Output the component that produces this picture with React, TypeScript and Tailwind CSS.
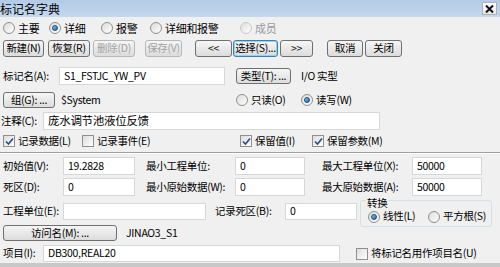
import React from "react";

const font = { fontFamily: '"Noto Sans CJK SC", "Noto Sans", sans-serif' };

function Btn({
  children,
  w,
  disabled,
  focused,
}: {
  children: React.ReactNode;
  w: string;
  disabled?: boolean;
  focused?: boolean;
}) {
  return (
    <div
      className={`${w} h-full shrink-0 flex items-center justify-center rounded-[3px] border leading-none whitespace-nowrap bg-gradient-to-b from-[#f6f6f6] to-[#dcdcdc] ${
        disabled
          ? "border-[#b5b8bb] text-[#a3a3a3]"
          : focused
          ? "border-[#3c7fb1] text-black shadow-[inset_0_0_0_1px_#8fd3f5]"
          : "border-[#707070] text-black"
      }`}
    >
      {children}
    </div>
  );
}

function Radio({ checked, disabled }: { checked?: boolean; disabled?: boolean }) {
  return (
    <div
      className={`w-[12px] h-[12px] shrink-0 rounded-full border flex items-center justify-center bg-gradient-to-br from-[#dcdcdc] to-[#ffffff] ${
        disabled ? "border-[#c8c8c8]" : "border-[#8e8f8f]"
      }`}
    >
      {checked && (
        <div className="w-[6px] h-[6px] rounded-full bg-gradient-to-br from-[#8ad0f5] to-[#1a5f9e] border border-[#1c4d7c]" />
      )}
    </div>
  );
}

function Check({ checked }: { checked?: boolean }) {
  return (
    <div className="w-[12px] h-[12px] shrink-0 border border-[#8e8f8f] bg-gradient-to-br from-[#dcdcdc] to-[#ffffff] flex items-center justify-center">
      {checked && (
        <svg width="9" height="9" viewBox="0 0 9 9">
          <path d="M1 4.5 L3.5 7 L8 1.5" fill="none" stroke="#2a4a8a" strokeWidth="1.6" />
        </svg>
      )}
    </div>
  );
}

function Field({ w, children }: { w: string; children?: React.ReactNode }) {
  return (
    <div className={`${w} h-full shrink-0 bg-white border border-[#d5d7da] flex items-center pl-[4px] leading-none`}>
      {children}
    </div>
  );
}

export default function App() {
  return (
    <div
      style={font}
      className="w-[500px] h-[267px] bg-[#f0f0f0] text-[10.5px] tracking-[-0.3px] whitespace-nowrap text-black flex flex-col overflow-hidden"
    >
      {/* 标题栏 */}
      <div className="h-[17px] shrink-0 bg-gradient-to-b from-[#b3cbe6] to-[#c4d8ee] flex items-center justify-between pr-[3px]">
        <span className="text-[12px] leading-none tracking-normal">标记名字典</span>
        <div className="w-[15px] h-[13px] bg-gradient-to-b from-white to-[#e6e6e6] border border-[#b0b0b0] flex items-center justify-center">
          <svg width="9" height="8" viewBox="0 0 9 8">
            <path d="M1 0.5 L8 7.5 M8 0.5 L1 7.5" stroke="#111" strokeWidth="2" />
          </svg>
        </div>
      </div>

      {/* 视图选择 */}
      <div className="mt-[3px] h-[16px] flex items-center pl-[3px] leading-none text-[11px]">
        <div className="w-[46px] flex items-center gap-[3px]"><Radio /><span>主要</span></div>
        <div className="w-[52px] flex items-center gap-[3px]"><Radio checked /><span>详细</span></div>
        <div className="w-[49px] flex items-center gap-[3px]"><Radio /><span>报警</span></div>
        <div className="w-[90px] flex items-center gap-[3px]"><Radio /><span>详细和报警</span></div>
        <div className="flex items-center gap-[3px] text-[#9a9a9a]"><Radio disabled /><span>成员</span></div>
      </div>

      {/* 按钮 */}
      <div className="mt-[4px] h-[17px] flex pl-[3px]">
        <Btn w="w-[41px]">新建(N)</Btn>
        <div className="w-[4px]" />
        <Btn w="w-[42px]">恢复(R)</Btn>
        <div className="w-[3px]" />
        <Btn w="w-[42px]" disabled>删除(D)</Btn>
        <div className="w-[10px]" />
        <Btn w="w-[37px]" disabled>保存(V)</Btn>
        <div className="w-[13px]" />
        <Btn w="w-[37px]">&lt;&lt;</Btn>
        <div className="w-[1px]" />
        <Btn w="w-[45px]" focused>选择(S)...</Btn>
        <div className="w-[2px]" />
        <Btn w="w-[33px]">&gt;&gt;</Btn>
        <div className="w-[14px]" />
        <Btn w="w-[36px]">取消</Btn>
        <div className="w-[2px]" />
        <Btn w="w-[37px]">关闭</Btn>
      </div>

      {/* 标记名 */}
      <div className="mt-[10px] h-[18px] flex items-center pl-[3px] leading-none">
        <span className="w-[56px]">标记名(A):</span>
        <Field w="w-[166px]">S1_FSTJC_YW_PV</Field>
        <div className="w-[11px]" />
        <div className="h-[16px]"><Btn w="w-[55px]">类型(T): ...</Btn></div>
        <span className="ml-[10px]">I/O 实型</span>
      </div>

      {/* 组 */}
      <div className="mt-[7px] h-[16px] flex items-center pl-[3px] leading-none">
        <Btn w="w-[52px]">组(G): ...</Btn>
        <span className="ml-[6px] w-[175px]">$System</span>
        <div className="w-[65px] flex items-center gap-[3px]"><Radio /><span>只读(O)</span></div>
        <div className="flex items-center gap-[3px]"><Radio checked /><span>读写(W)</span></div>
      </div>

      {/* 注释 */}
      <div className="mt-[4px] h-[18px] flex items-center pl-[1px] leading-none">
        <span className="w-[42px]">注释(C):</span>
        <Field w="w-[337px]"><span className="text-[11.5px]">庞水调节池液位反馈</span></Field>
      </div>

      {/* 记录选项 */}
      <div className="mt-[4px] h-[14px] flex items-center pl-[3px] leading-none">
        <div className="w-[79px] flex items-center gap-[3px]"><Check checked /><span>记录数据(L)</span></div>
        <div className="w-[158px] flex items-center gap-[3px]"><Check /><span>记录事件(E)</span></div>
        <div className="w-[72px] flex items-center gap-[3px]"><Check checked /><span>保留值(I)</span></div>
        <div className="flex items-center gap-[3px]"><Check checked /><span>保留参数(M)</span></div>
      </div>

      {/* 分隔线 */}
      <div className="mt-[4px] h-[2px] border-t border-[#a0a0a0] border-b border-b-white" />

      {/* 初始值 */}
      <div className="mt-[3px] h-[18px] flex items-center pl-[3px] leading-none">
        <span className="w-[60px]">初始值(V):</span>
        <Field w="w-[72px]">19.2828</Field>
        <span className="ml-[11px] w-[89px]">最小工程单位:</span>
        <Field w="w-[70px]">0</Field>
        <span className="ml-[17px] w-[90px]">最大工程单位(X):</span>
        <Field w="w-[70px]">50000</Field>
      </div>

      {/* 死区 */}
      <div className="mt-[3px] h-[18px] flex items-center pl-[3px] leading-none">
        <span className="w-[60px]">死区(D):</span>
        <Field w="w-[72px]">0</Field>
        <span className="ml-[11px] w-[89px]">最小原始数据(W):</span>
        <Field w="w-[70px]">0</Field>
        <span className="ml-[17px] w-[90px]">最大原始数据(A):</span>
        <Field w="w-[70px]">50000</Field>
      </div>

      {/* 工程单位 */}
      <div className="mt-[4px] h-[25px] flex items-start pl-[3px] leading-none">
        <div className="mt-[3px] h-[17px] flex items-center">
          <span className="w-[60px]">工程单位(E):</span>
          <Field w="w-[143px]" />
          <span className="ml-[9px] w-[70px]">记录死区(B):</span>
          <Field w="w-[72px]">0</Field>
        </div>
        <div className="ml-[3px] relative w-[132px] h-[27px] shrink-0 border border-[#d5dfe5] rounded-[3px] flex items-center pt-[6px] pl-[7px] gap-[3px]">
          <span className="absolute -top-[3px] left-[5px] bg-[#f0f0f0] px-[1px]">转换</span>
          <Radio checked />
          <span className="w-[42px]">线性(L)</span>
          <Radio />
          <span>平方根(S)</span>
        </div>
      </div>

      {/* 访问名 */}
      <div className="h-[16px] flex items-center pl-[3px] leading-none">
        <Btn w="w-[114px]">访问名(M): ...</Btn>
        <span className="ml-[9px]">JINAO3_S1</span>
      </div>

      {/* 项目 */}
      <div className="mt-[4px] h-[17px] flex items-center pl-[3px] leading-none">
        <span className="w-[40px]">项目(I):</span>
        <Field w="w-[297px]">DB300,REAL20</Field>
        <div className="ml-[16px] flex items-center gap-[3px]"><Check /><span>将标记名用作项目名(U)</span></div>
      </div>

      <div className="mt-[1px] flex-1 bg-[#c8c8c8]" />
    </div>
  );
}
